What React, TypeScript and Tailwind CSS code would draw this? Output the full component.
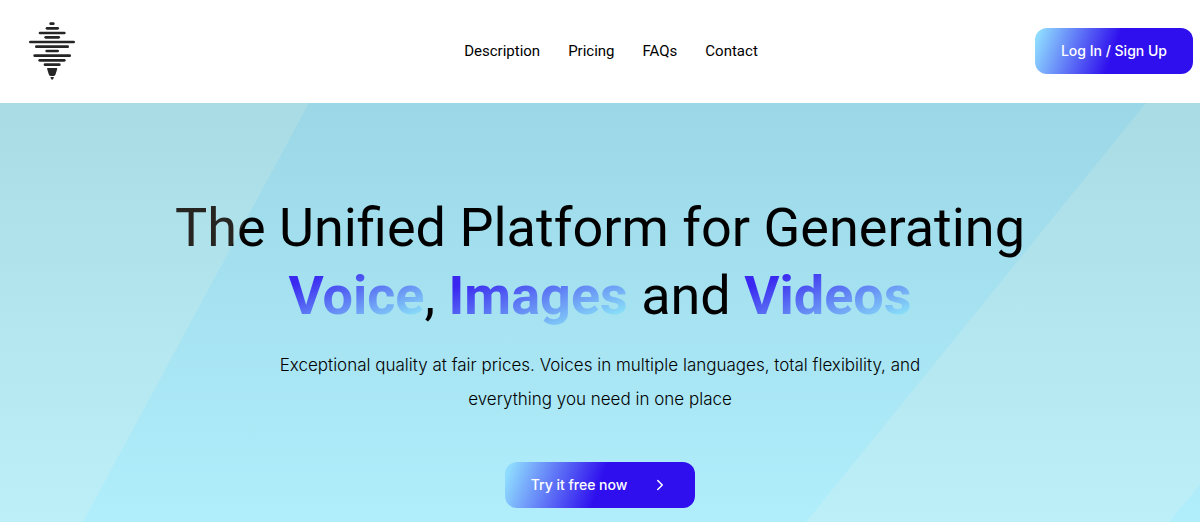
import type { ReactNode } from "react";
import { ChevronRight } from "lucide-react";

const NAV_LINKS = [
  { label: "Description", href: "#description" },
  { label: "Pricing", href: "#pricing" },
  { label: "FAQs", href: "#faqs" },
  { label: "Contact", href: "#contact" },
];

// [x start, x end, y] of each sound bar in the logo
const LOGO_BARS = [
  [93, 101, 41],
  [82, 114, 55],
  [61, 134, 69],
  [78, 117, 82],
  [32, 162, 96],
  [50, 144, 110],
  [81, 114, 123],
  [45, 150, 137],
  [60, 134, 151],
  [76, 119, 164],
];

function Logo() {
  return (
    <svg viewBox="28 36 138 174" className="h-[58px] w-[46px]" aria-hidden="true">
      <g stroke="#252525" strokeWidth="8" strokeLinecap="round">
        {LOGO_BARS.map(([x1, x2, y]) => (
          <line key={y} x1={x1} x2={x2} y1={y} y2={y} />
        ))}
      </g>
      <path
        d="M84 174h27c1.500 0 2 1 1.600 3l-4.600 15c-1 4-3 6-6 6h-9c-3 0-5-2-6-6l-4.600-15c-.4-2 .1-3 1.600-3z"
        fill="#252525"
      />
      <path d="M92 201h11l-3 7c-1 2-4 2-5 0z" fill="#252525" />
    </svg>
  );
}

function GradientWord({ children }: { children: ReactNode }) {
  return (
    <span className="bg-[linear-gradient(160deg,#3a28f0_20%,#88dcf8_86%)] bg-clip-text font-bold text-transparent">
      {children}
    </span>
  );
}

function HeroShapes() {
  return (
    <svg
      viewBox="0 0 1200 419"
      preserveAspectRatio="none"
      className="pointer-events-none absolute inset-0 h-full w-full"
      aria-hidden="true"
    >
      <g fill="#fffae6" fillOpacity="0.15">
        <polygon points="0,0 309,0 83,419 0,419" />
        <polygon points="1146,0 1200,0 1200,382 1169,419 806,419" />
      </g>
    </svg>
  );
}

export default function App() {
  return (
    <div className="flex min-h-screen flex-col bg-white font-[Inter,sans-serif] text-black">
      <header className="grid grid-cols-[1fr_auto_1fr] items-center pt-[22px] pr-[7px] pb-[23px] pl-[29px]">
        <a href="#home" aria-label="Home" className="justify-self-start">
          <Logo />
        </a>
        <nav className="flex gap-7 font-[Roboto,sans-serif] text-[15px]">
          {NAV_LINKS.map((link) => (
            <a key={link.href} href={link.href}>
              {link.label}
            </a>
          ))}
        </nav>
        <button
          type="button"
          className="h-[46px] justify-self-end rounded-xl bg-[linear-gradient(110deg,#8fdcff_3%,#2f0fee_50%)] px-[26px] text-sm font-medium text-white"
        >
          Log In / Sign Up
        </button>
      </header>

      <main className="relative flex grow flex-col items-center bg-linear-to-b from-[#9bd7e6] to-[#b1eefc] px-4 pt-[91px] pb-[14px] text-center">
        <h1 className="font-[Roboto,sans-serif] text-[54px] leading-[68px]">
          The Unified Platform for Generating
          <br />
          <GradientWord>Voice</GradientWord>, <GradientWord>Images</GradientWord> and{" "}
          <GradientWord>Videos</GradientWord>
        </h1>
        <p className="mt-[18px] max-w-[680px] text-[17px] leading-[34px] font-light">
          Exceptional quality at fair prices. Voices in multiple languages, total flexibility, and
          everything you need in one place
        </p>
        <button
          type="button"
          className="mt-[46px] flex h-[46px] items-center gap-6 rounded-xl bg-[linear-gradient(110deg,#8fdcff_3%,#2f0fee_50%)] px-[26px] text-sm font-medium text-white"
        >
          Try it free now
          <ChevronRight size={18} />
        </button>
        <HeroShapes />
      </main>
    </div>
  );
}
